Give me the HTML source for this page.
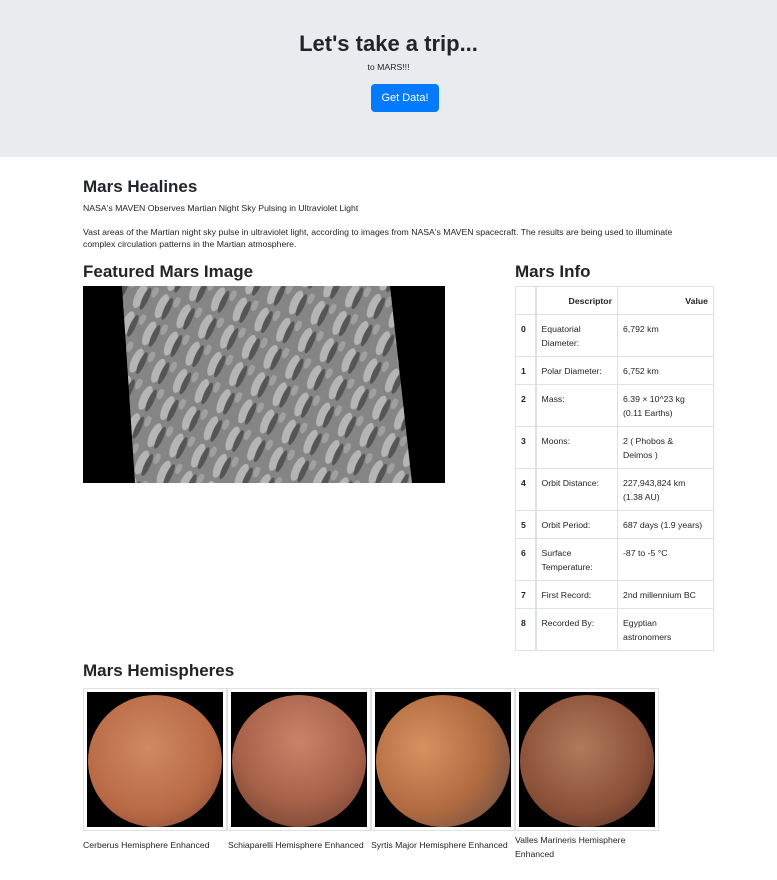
<!DOCTYPE html>
<html><head><meta charset="utf-8"><style>
*{margin:0;padding:0;box-sizing:border-box}
body{width:777px;height:880px;background:#fff;font-family:"Liberation Sans",sans-serif;color:#212529;position:relative;overflow:hidden}
.a{position:absolute;white-space:nowrap}
.jum{position:absolute;left:0;top:0;width:777px;height:157px;background:#e9ecef}
h1{font-size:22px;font-weight:bold}
h2{font-size:17px;font-weight:bold}
.s{font-size:8.7px}
table{position:absolute;left:515px;top:286px;border-collapse:collapse;font-size:8.7px;border:1px solid #999}
td,th{border:1px solid #dee2e6;padding:0 5px;vertical-align:top;padding-top:7px;line-height:14px}
th{font-weight:bold;text-align:right;height:28px;vertical-align:middle;padding-top:0}
td:first-child,th:first-child{font-weight:bold;border-right:2px solid #dee2e6;width:20px}
.th{position:absolute;width:144px;height:143px;top:688px;border:1px solid #dee2e6;background:#fff;padding:3px}
.th div{width:100%;height:100%;background:#000;position:relative;overflow:hidden}
.th div span{position:absolute;left:1px;top:3px;width:134px;height:132px;border-radius:50%}
</style></head><body>
<div class="jum"></div>
<h1 class="a" style="left:0;width:777px;text-align:center;top:31px">Let's take a trip...</h1>
<div class="a s" style="left:0;width:777px;text-align:center;top:62px">to MARS!!!</div>
<div class="a" style="left:371px;top:84px;width:68px;height:28px;background:#007bff;border-radius:4px;color:#fff;font-size:11px;text-align:center;line-height:28px">Get Data!</div>
<h2 class="a" style="left:83px;top:177px">Mars Healines</h2>
<div class="a s" style="left:83px;top:203px">NASA's MAVEN Observes Martian Night Sky Pulsing in Ultraviolet Light</div>
<div class="a s" style="left:83px;top:226px;line-height:12px">Vast areas of the Martian night sky pulse in ultraviolet light, according to images from NASA's MAVEN spacecraft. The results are being used to illuminate<br>complex circulation patterns in the Martian atmosphere.</div>
<h2 class="a" style="left:83px;top:262px">Featured Mars Image</h2>
<h2 class="a" style="left:515px;top:262px">Mars Info</h2>
<svg class="a" style="left:83px;top:286px" width="362" height="197"><rect width="362" height="197" fill="#000"/>
<defs><pattern id="p" width="24" height="30" patternUnits="userSpaceOnUse" patternTransform="rotate(25)"><rect width="24" height="30" fill="#858585"/><ellipse cx="8" cy="15" rx="5" ry="13" fill="#b5b5b5"/><ellipse cx="14" cy="15" rx="3" ry="12" fill="#555"/><ellipse cx="20" cy="5" rx="3" ry="6" fill="#a0a0a0"/></pattern></defs>
<polygon points="39,0 307,0 329,197 52,197" fill="url(#p)"/></svg>
<table>
<tr><th></th><th style="width:82px">Descriptor</th><th style="width:96px">Value</th></tr>
<tr style="height:42px"><td>0</td><td>Equatorial<br>Diameter:</td><td>6,792 km</td></tr>
<tr style="height:28px"><td>1</td><td>Polar Diameter:</td><td>6,752 km</td></tr>
<tr style="height:42px"><td>2</td><td>Mass:</td><td>6.39 × 10^23 kg<br>(0.11 Earths)</td></tr>
<tr style="height:42px"><td>3</td><td>Moons:</td><td>2 ( Phobos &amp;<br>Deimos )</td></tr>
<tr style="height:42px"><td>4</td><td>Orbit Distance:</td><td>227,943,824 km<br>(1.38 AU)</td></tr>
<tr style="height:28px"><td>5</td><td>Orbit Period:</td><td>687 days (1.9 years)</td></tr>
<tr style="height:42px"><td>6</td><td>Surface<br>Temperature:</td><td>-87 to -5 °C</td></tr>
<tr style="height:28px"><td>7</td><td>First Record:</td><td>2nd millennium BC</td></tr>
<tr style="height:42px"><td>8</td><td>Recorded By:</td><td>Egyptian<br>astronomers</td></tr>
</table>
<h2 class="a" style="left:83px;top:661px">Mars Hemispheres</h2>
<div class="th" style="left:83px"><div><span style="background:radial-gradient(circle at 45% 40%,#d08a63,#b86a45 60%,#7a4030)"></span></div></div>
<div class="th" style="left:227px"><div><span style="background:radial-gradient(circle at 50% 35%,#c98468,#a8624a 55%,#6a3a2c)"></span></div></div>
<div class="th" style="left:371px"><div><span style="background:radial-gradient(circle at 35% 40%,#d89060,#b06a40 55%,#5a4848)"></span></div></div>
<div class="th" style="left:515px"><div><span style="background:radial-gradient(circle at 45% 40%,#b07a5c,#8a5038 60%,#4a2a22)"></span></div></div>
<div class="a s" style="left:83px;top:840px">Cerberus Hemisphere Enhanced</div>
<div class="a s" style="left:228px;top:840px">Schiaparelli Hemisphere Enhanced</div>
<div class="a s" style="left:371px;top:840px">Syrtis Major Hemisphere Enhanced</div>
<div class="a s" style="left:515px;top:833px;line-height:14px">Valles Marineris Hemisphere<br>Enhanced</div>
</body></html>
